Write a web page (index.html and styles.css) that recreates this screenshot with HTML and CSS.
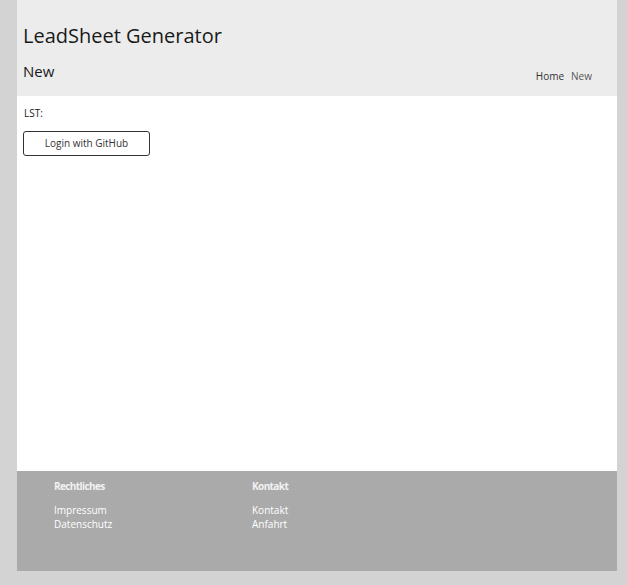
FILE: index.html
```html
<!DOCTYPE html>
<html lang="de">
<head>
    <meta charset="UTF-8">
    <title>LeadSheet Generator</title>
    <link rel="stylesheet" href="styles.css">
</head>
<body>

<div class="page">
    <!-- Kopfbereich -->
    <header class="header">
        <h1 class="site-title">LeadSheet Generator</h1>
        <div class="header-row">
            <h2 class="page-title">New</h2>
            <nav class="nav">
                <a href="#">Home</a>
                <a href="#" class="nav-current">New</a>
            </nav>
        </div>
    </header>

    <!-- Inhalt -->
    <main class="content">
        <p class="lst">LST:</p>
        <button class="btn">Login with GitHub</button>
    </main>

    <!-- Fußbereich -->
    <footer class="footer">
        <div class="footer-col">
            <h3>Rechtliches</h3>
            <a href="#">Impressum</a>
            <a href="#">Datenschutz</a>
        </div>
        <div class="footer-col">
            <h3>Kontakt</h3>
            <a href="#">Kontakt</a>
            <a href="#">Anfahrt</a>
        </div>
    </footer>
</div>

</body>
</html>
```

FILE: styles.css
```css
body {
    font-family: "Open Sans", Arial, sans-serif;
    background-color: #d3d3d3;
    margin: 0;
    padding: 0;
    color: #1a1a1a;
}

.page {
    width: 600px;
    margin-left: 17px;
}

.header {
    background-color: #ececec;
    height: 96px;
    padding: 0 6px;
    box-sizing: border-box;
}

.site-title {
    font-size: 20px;
    font-weight: normal;
    margin: 0;
    padding-top: 22px;
    line-height: 28px;
}

.header-row {
    display: flex;
    justify-content: space-between;
    align-items: flex-end;
    margin-top: 11px;
}

.page-title {
    font-size: 15px;
    font-weight: normal;
    margin: 0;
    line-height: 20px;
}

.nav {
    display: flex;
    gap: 7px;
    margin-right: 19px;
    margin-bottom: -2px;
}

.nav a {
    font-size: 10px;
    color: #333;
    text-decoration: none;
}

.nav .nav-current {
    color: #555;
}

.content {
    background-color: #fff;
    height: 375px;
    padding: 8px 6px;
    box-sizing: border-box;
}

.lst {
    font-size: 10px;
    margin: 2px 0 10px 1px;
}

.btn {
    font-family: "Open Sans", Arial, sans-serif;
    font-size: 10px;
    color: #333;
    background-color: #fff;
    border: 1px solid #333;
    border-radius: 3px;
    width: 127px;
    height: 25px;
    cursor: pointer;
}

.footer {
    background-color: #aaa;
    height: 100px;
    padding: 8px 37px;
    box-sizing: border-box;
    display: grid;
    grid-template-columns: 198px 198px;
}

.footer-col h3 {
    font-size: 10px;
    font-weight: bold;
    letter-spacing: -0.6px;
    color: #f2f2f2;
    margin: 0 0 10px 0;
}

.footer-col a {
    display: block;
    font-size: 10px;
    line-height: 14px;
    color: #fff;
    text-decoration: none;
}
```
